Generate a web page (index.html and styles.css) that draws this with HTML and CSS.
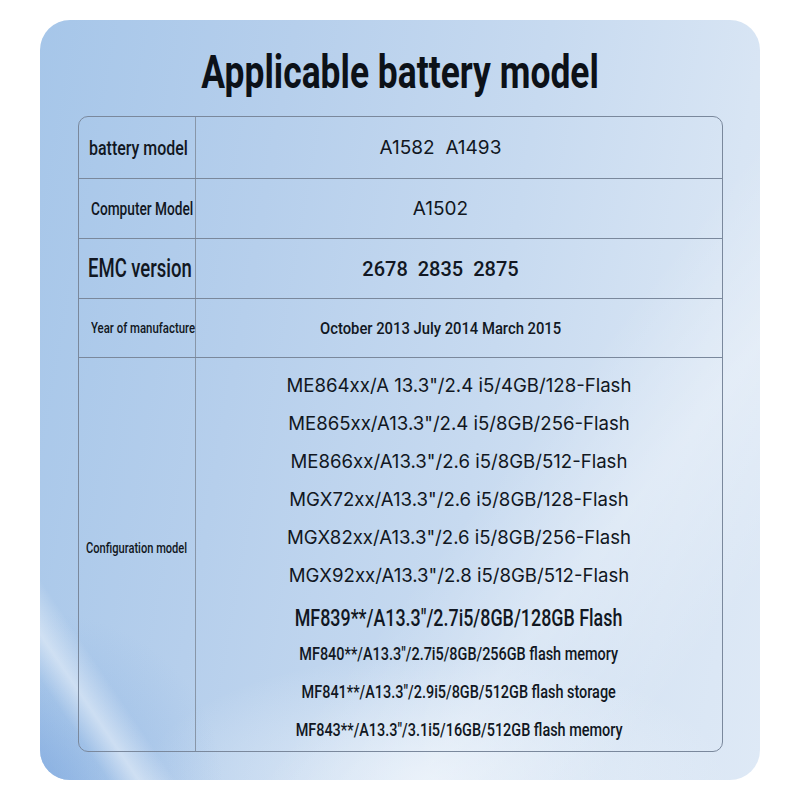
FILE: index.html
```html
<!DOCTYPE html>
<html>
<head>
<meta charset="utf-8">
<link rel="stylesheet" href="styles.css">
</head>
<body>
<div class="card">
  <div class="glow"></div>
  <h1 class="title"><span class="sq">Applicable battery model</span></h1>
  <div class="table">
    <div class="row r1">
      <div class="label l-battery"><span class="sq">battery model</span></div>
      <div class="value v-geo v-shift">A1582&nbsp; A1493</div>
    </div>
    <div class="row r2">
      <div class="label l-computer"><span class="sq">Computer Model</span></div>
      <div class="value v-geo v-shift">A1502</div>
    </div>
    <div class="row r3">
      <div class="label l-emc"><span class="sq">EMC version</span></div>
      <div class="value v-emc v-shift">2678&nbsp; 2835&nbsp; 2875</div>
    </div>
    <div class="row r4">
      <div class="label l-year"><span class="sq">Year of manufacture</span></div>
      <div class="value v-year v-shift"><span class="sq">October 2013 July 2014 March 2015</span></div>
    </div>
    <div class="row r5">
      <div class="label l-config"><span class="sq">Configuration model</span></div>
      <div class="value configs">
        <div class="cfg geo">ME864xx/A 13.3"/2.4 i5/4GB/128-Flash</div>
        <div class="cfg geo">ME865xx/A13.3"/2.4 i5/8GB/256-Flash</div>
        <div class="cfg geo">ME866xx/A13.3"/2.6 i5/8GB/512-Flash</div>
        <div class="cfg geo">MGX72xx/A13.3"/2.6 i5/8GB/128-Flash</div>
        <div class="cfg geo">MGX82xx/A13.3"/2.6 i5/8GB/256-Flash</div>
        <div class="cfg geo">MGX92xx/A13.3"/2.8 i5/8GB/512-Flash</div>
        <div class="cfg big"><span class="sq">MF839**/A13.3"/2.7i5/8GB/128GB Flash</span></div>
        <div class="cfg small"><span class="sq">MF840**/A13.3"/2.7i5/8GB/256GB flash memory</span></div>
        <div class="cfg small"><span class="sq">MF841**/A13.3"/2.9i5/8GB/512GB flash storage</span></div>
        <div class="cfg small"><span class="sq">MF843**/A13.3"/3.1i5/16GB/512GB flash memory</span></div>
      </div>
    </div>
  </div>
</div>
</body>
</html>
```

FILE: styles.css
```css
* { box-sizing: border-box; }
html, body { margin: 0; padding: 0; background: #ffffff; }
body { width: 800px; height: 800px; overflow: hidden; }

.card {
  position: relative;
  margin: 20px 40px;
  width: 720px;
  height: 760px;
  border-radius: 30px;
  overflow: hidden;
  background:
    linear-gradient(100deg, #a6c6e9 0%, #b6cfec 30%, #c7daf0 60%, #d8e5f4 85%, #dee9f6 100%);
  padding: 0 37px 28px 38px;
  display: flex;
  flex-direction: column;
  color: #101722;
}

.glow {
  position: absolute;
  inset: 0;
  background:
    linear-gradient(56deg, rgba(128,168,222,0.55) 0%, transparent 5.5%, rgba(255,255,255,0.45) 8%, transparent 11%),
    linear-gradient(128deg, transparent 62%, rgba(255,255,255,0.28) 74%, transparent 88%),
    radial-gradient(ellipse 260px 240px at 0% 100%, rgba(135,176,226,0.6), transparent 70%),
    radial-gradient(ellipse 420px 180px at 55% 100%, rgba(242,247,252,0.65), transparent 70%);
  pointer-events: none;
}

.sq {
  display: inline-block;
  white-space: nowrap;
  transform: scaleX(0.76);
  transform-origin: center center;
}

.title {
  position: relative;
  flex: 0 0 96px;
  margin: 0;
  height: 96px;
  padding-top: 29px;
  text-align: center;
  font-family: "Roboto", sans-serif;
  font-weight: 700;
  font-size: 46px;
  line-height: 1;
  color: #0c1118;
}
.title .sq { transform: scaleX(0.77); }

.table {
  position: relative;
  flex: 1;
  border: 1px solid #7a889c;
  border-radius: 10px;
  display: flex;
  flex-direction: column;
}

.row {
  display: grid;
  grid-template-columns: 117px 1fr;
  border-bottom: 1px solid #7a889c;
  flex-shrink: 0;
}
.row.r1 { height: 62px; }
.row.r2 { height: 60px; }
.row.r3 { height: 60px; }
.row.r4 { height: 59px; }
.row.r5 { flex: 1; border-bottom: none; }

.label {
  border-right: 1px solid #8896a8;
  display: flex;
  align-items: center;
  padding-left: 10px;
  font-family: "Roboto", sans-serif;
  font-weight: 500;
  white-space: nowrap;
  color: #111722;
  min-width: 0;
}
.label .sq { transform-origin: left center; }
.l-battery { font-size: 21px; padding-left: 10px; }
.l-computer { font-size: 18px; padding-left: 12px; }
.l-emc { font-size: 25px; padding-left: 9px; }
.l-emc .sq { transform: scaleX(0.74); }
.l-year { font-size: 15px; padding-left: 12px; }
.l-config { font-size: 15px; padding-left: 7px; padding-bottom: 14px; }
.l-config .sq { transform: scaleX(0.74); }

.value {
  display: flex;
  align-items: center;
  justify-content: center;
  white-space: nowrap;
  color: #111722;
  min-width: 0;
}
.v-shift { padding-right: 37px; }
.v-geo {
  font-family: "Inter", "Noto Sans", sans-serif;
  font-size: 19px;
}
.v-emc {
  font-family: "Roboto", sans-serif;
  font-weight: 500;
  font-size: 20px;
}
.v-year {
  font-family: "Roboto", sans-serif;
  font-weight: 500;
  font-size: 17px;
}
.v-year .sq { transform: scaleX(0.87); }

.configs {
  flex-direction: column;
  justify-content: flex-start;
  padding-top: 8px;
}
.cfg { line-height: 38px; height: 38px; flex-shrink: 0; }
.cfg.geo {
  font-family: "Inter", "Noto Sans", sans-serif;
  font-size: 18.6px;
}
.cfg.big {
  font-family: "Roboto", sans-serif;
  font-weight: 500;
  font-size: 23.5px;
  margin: 5px 0 -2px;
}
.cfg.small {
  font-family: "Roboto", sans-serif;
  font-weight: 500;
  font-size: 19px;
}
```
